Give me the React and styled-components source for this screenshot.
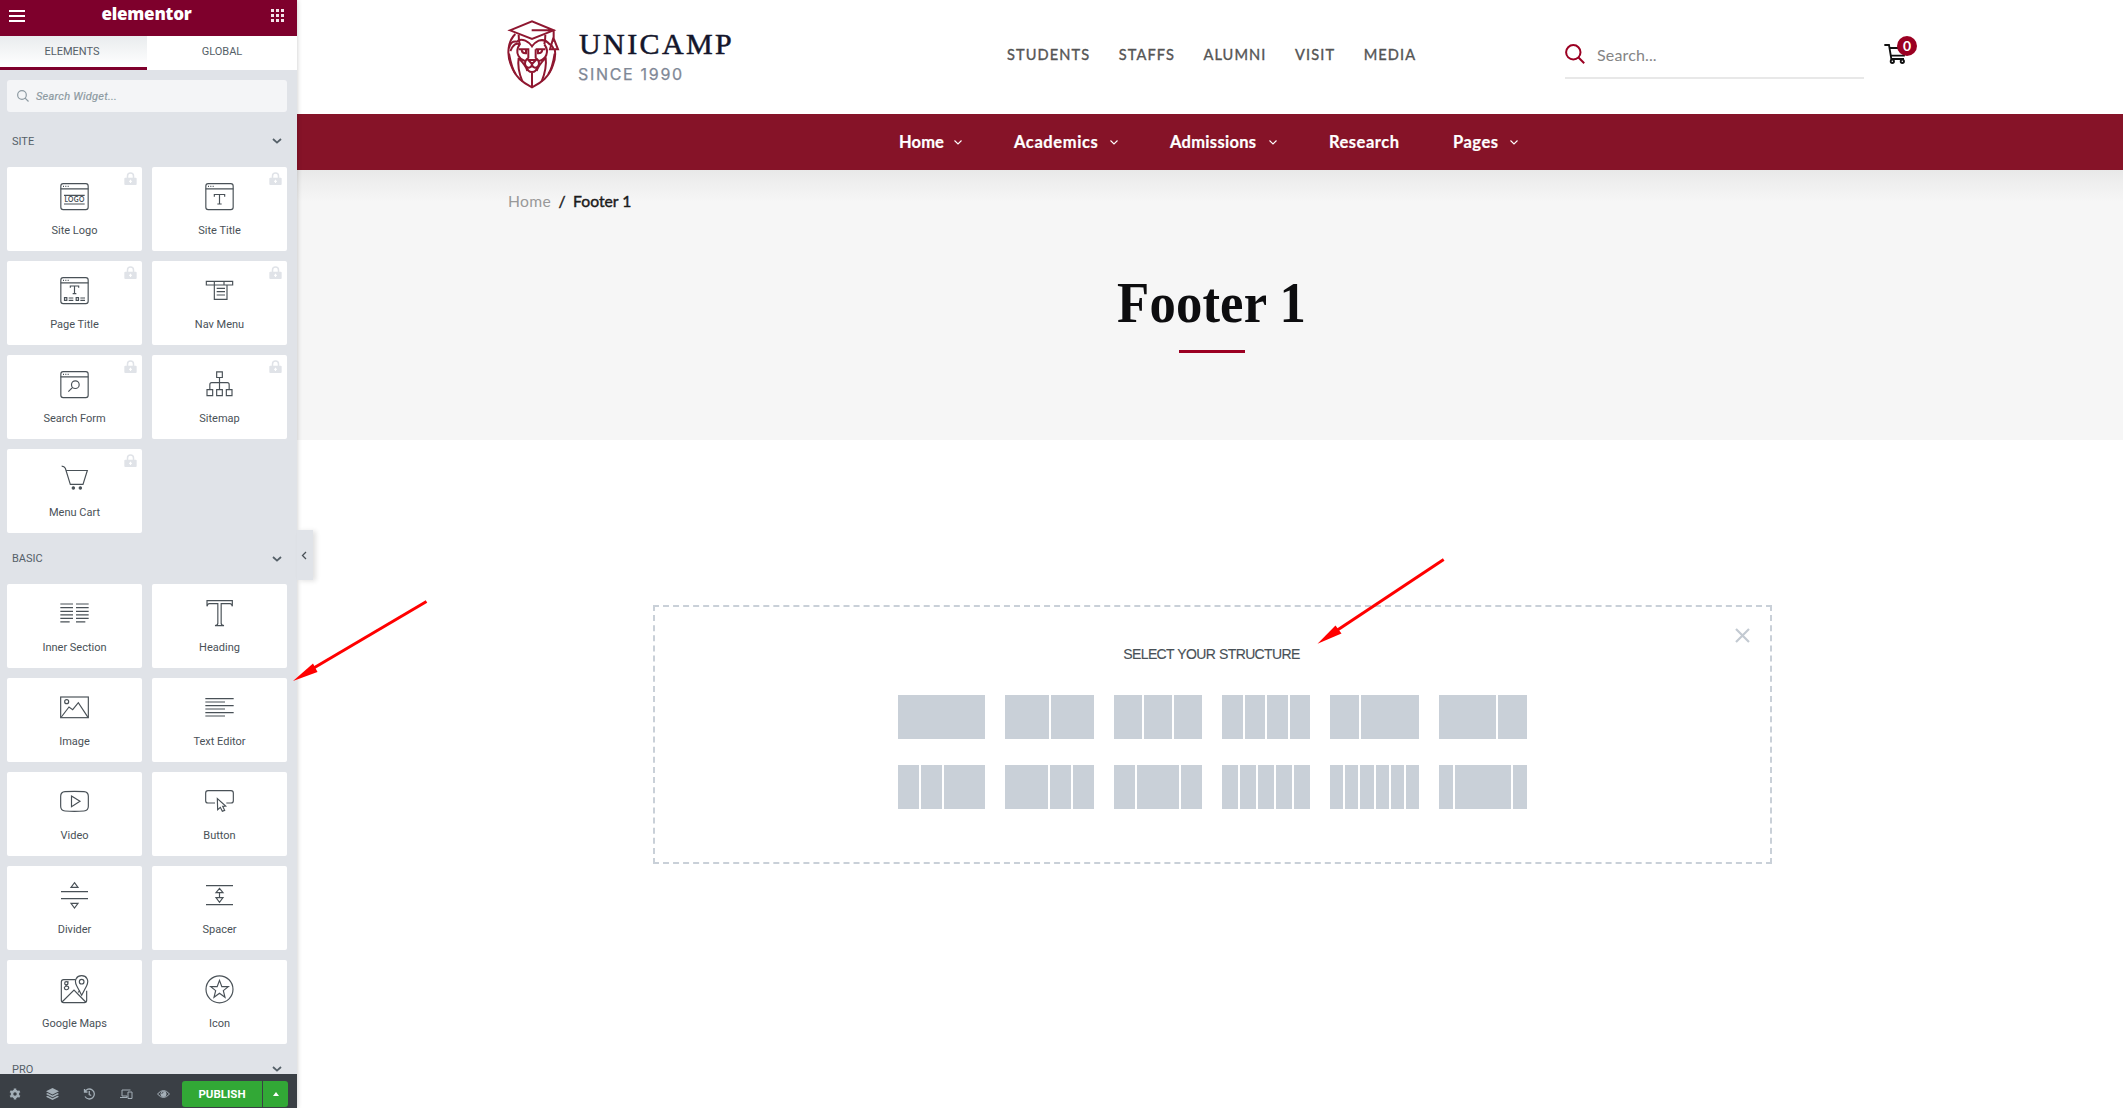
import React from "react";
import styled, { createGlobalStyle } from "styled-components";

const Global = createGlobalStyle`
  * { box-sizing: border-box; }
  html, body { margin: 0; padding: 0; background: #fff; overflow: hidden; }
`;

const Page = styled.div`
  position: relative;
  display: flex;
  width: 2123px;
  height: 1108px;
  overflow: hidden;
  font-family: Lato, "Liberation Sans", sans-serif;
`;

/* ---------- editor panel ---------- */
const Panel = styled.aside`
  position: relative;
  z-index: 2;
  display: flex;
  flex-direction: column;
  flex: none;
  width: 297px;
  height: 1108px;
  background: #e0e3e8;
  box-shadow: 0 0 5px rgba(0, 0, 0, 0.22);
  font-family: Roboto, "Liberation Sans", sans-serif;
`;
const PanelHeader = styled.header`
  display: flex;
  justify-content: space-between;
  flex: none;
  height: 36px;
  padding: 9px 13px 0 9px;
  background: #7e002c;
`;
const Burger = styled.div`
  display: flex;
  flex-direction: column;
  gap: 3px;
  padding-top: 1px;
  width: 16px;
  i { height: 2px; background: #fff; }
`;
const Brand = styled.div`
  margin: -8px 3px 0 0;
  font: 800 17px/26px "Open Sans", sans-serif;
  letter-spacing: -0.2px;
  color: #fff;
`;
const Dots = styled.div`
  display: grid;
  grid-template-columns: repeat(3, 3px);
  grid-auto-rows: 3px;
  gap: 2px;
  i { background: #f3e4e9; }
`;
const Tabs = styled.div`
  display: flex;
  flex: none;
  height: 34px;
`;
const Tab = styled.div`
  width: ${(p) => (p.$active ? 147 : 150)}px;
  padding-right: ${(p) => (p.$active ? 3 : 0)}px;
  text-align: center;
  font-size: 11px;
  line-height: 31px;
  color: #556068;
  background: ${(p) => (p.$active ? "linear-gradient(#e9ecee, #fff)" : "#fff")};
  border-bottom: 3px solid ${(p) => (p.$active ? "#7e002c" : "#fff")};
`;
const WidgetSearch = styled.div`
  display: flex;
  align-items: center;
  gap: 7px;
  flex: none;
  width: 280px;
  height: 32px;
  margin: 10px 0 0 7px;
  padding-left: 10px;
  border-radius: 3px;
  background: #f4f5f7;
  color: #8d9aa2;
  font-size: 11px;
  font-style: italic;
  letter-spacing: 0.25px;
  -webkit-text-stroke: 0.2px #8d9aa2;
`;
const Category = styled.div`
  display: flex;
  align-items: center;
  justify-content: space-between;
  flex: none;
  height: ${(p) => p.$h}px;
  padding: ${(p) => p.$pt || 0}px 15px 0 12px;
  font-size: 11px;
  color: #556068;
`;
const Grid = styled.div`
  display: grid;
  flex: none;
  grid-template-columns: 135px 135px;
  grid-auto-rows: 84px;
  gap: 10px;
  padding-left: 7px;
`;
const Card = styled.div`
  position: relative;
  display: flex;
  flex-direction: column;
  align-items: center;
  padding-top: 15px;
  border-radius: 2px;
  background: #fff;
  font-size: 11px;
  line-height: 14px;
  color: #495157;
  span { margin-top: 13px; }
`;
const LockBadge = styled.svg`
  position: absolute;
  right: 5px;
  top: 5px;
`;
const PanelFooter = styled.footer`
  display: flex;
  position: relative;
  flex: none;
  align-items: center;
  height: 34px;
  padding: 6px 9px 0 9px;
  background: #3a3f45;
`;
const Tools = styled.div`
  display: flex;
  justify-content: space-between;
  width: 161px;
`;
const Publish = styled.div`
  width: 80px;
  height: 26px;
  margin: 0 1px 0 12px;
  border-radius: 3px 0 0 3px;
  background: #32a836;
  color: #fff;
  font-size: 11.5px;
  font-weight: 700;
  line-height: 27px;
  text-align: center;
`;
const PublishMore = styled.div`
  display: flex;
  align-items: center;
  justify-content: center;
  width: 25px;
  height: 26px;
  border-radius: 0 3px 3px 0;
  background: #32a836;
`;
const Handle = styled.div`
  position: absolute;
  left: 297px;
  top: 530px;
  width: 15.5px;
  height: 50px;
  padding: 20px 0 0 4px;
  background: #e0e3e8;
  box-shadow: 3px 1px 5px rgba(0, 0, 0, 0.12);
  line-height: 0;
`;

/* ---------- site preview ---------- */
const Preview = styled.main`
  display: flex;
  flex-direction: column;
  flex: 1;
  min-width: 0;
`;
const SiteHeader = styled.header`
  display: flex;
  flex: none;
  height: 114px;
  padding-left: 210px;
  background: #fff;
`;
const Logo = styled.div`
  display: flex;
  width: 500px;
  padding-top: 20px;
`;
const LogoText = styled.div`
  margin-left: 18px;
`;
const LogoName = styled.div`
  margin: 7px 0 0 1px;
  font: 400 30px/34px "Liberation Serif", serif;
  letter-spacing: 2.4px;
  color: #14162b;
  -webkit-text-stroke: 0.5px #14162b;
  white-space: nowrap;
`;
const LogoSub = styled.div`
  margin-top: 3px;
  font: 400 16px/20px Inter, sans-serif;
  letter-spacing: 1.7px;
  color: #7f8896;
  -webkit-text-stroke: 0.25px #7f8896;
`;
const TopNav = styled.nav`
  display: flex;
  gap: 28.5px;
  width: 558px;
  font-size: 14.6px;
  line-height: 110px;
  letter-spacing: 1.1px;
  color: #555;
  -webkit-text-stroke: 0.35px #555;
`;
const SiteSearch = styled.div`
  display: flex;
  align-items: center;
  gap: 12px;
  width: 299px;
  height: 48px;
  margin-top: 31px;
  border-bottom: 2px solid #e8e8e8;
  color: #858585;
  font-size: 16px;
  letter-spacing: 0.15px;
`;
const Cart = styled.div`
  position: relative;
  margin: 43px 0 0 20px;
`;
const CartCount = styled.div`
  position: absolute;
  left: 13px;
  top: -7px;
  width: 20px;
  height: 20px;
  border-radius: 50%;
  background: #9b0022;
  color: #fff;
  font-size: 14px;
  font-weight: 700;
  line-height: 20px;
  text-align: center;
`;
const MainNav = styled.nav`
  display: flex;
  flex: none;
  height: 56px;
  padding-left: 602px;
  background: #861328;
  color: #fff;
  font-size: 16.5px;
  font-weight: 700;
  line-height: 56px;
  -webkit-text-stroke: 0.2px #fff;
`;
const NavItem = styled.div`
  display: flex;
  align-items: center;
  justify-content: space-between;
  width: ${(p) => p.$w}px;
  margin-right: 52px;
  letter-spacing: ${(p) => p.$ls}px;
  white-space: nowrap;
`;
const TitleArea = styled.section`
  display: flex;
  flex-direction: column;
  align-items: center;
  flex: none;
  height: 270px;
  padding-left: 4px;
  background: linear-gradient(#e8e8e8, #efefef 14px, #f6f6f6 32px, #f6f6f6);
`;
const Crumbs = styled.div`
  align-self: flex-start;
  display: flex;
  gap: 7.5px;
  padding: 20px 0 0 207px;
  font-size: 15.7px;
  line-height: 22px;
  color: #1c1c1c;
  -webkit-text-stroke: 0.45px #1c1c1c;
  span:first-child { color: #999; letter-spacing: 0.3px; -webkit-text-stroke: 0; }
`;
const Title = styled.h1`
  margin: 59px 0 0;
  font: 700 56px/64px "Liberation Serif", serif;
  letter-spacing: 0.2px;
  transform: scaleX(0.94);
  color: #0d0d0f;
`;
const TitleBar = styled.div`
  width: 66px;
  height: 3px;
  margin-top: 15px;
  background: #9b0022;
`;
const Structure = styled.section`
  position: relative;
  display: flex;
  flex-direction: column;
  align-items: center;
  width: 1119px;
  height: 259px;
  margin: 165px 0 0 356px;
  padding-top: 38px;
  border: 2px dashed #c9d0d8;
`;
const StructureTitle = styled.div`
  margin-right: 2px;
  font: 400 14px/18px "Liberation Sans", Arial, sans-serif;
  letter-spacing: -0.64px;
  word-spacing: 0.6px;
  color: #495157;
  -webkit-text-stroke: 0.15px #495157;
`;
const Presets = styled.div`
  display: grid;
  grid-template-columns: 87px 89px 88px 88px 89px 88px;
  gap: 26px 20px;
  margin-top: 32px;
`;
const Preset = styled.div`
  display: grid;
  grid-template-columns: ${(p) => p.$cols};
  gap: 2px;
  height: 44px;
  i { background: #c9d0d8; }
`;
const Close = styled.svg`
  position: absolute;
  right: 20.5px;
  top: 20.5px;
`;
const Annotation = styled.svg`
  position: absolute;
  z-index: 3;
  left: ${(p) => p.$x}px;
  top: ${(p) => p.$y}px;
`;

/* ---------- drawings ---------- */
const Frame = () => (
  <>
    <rect x="2.5" y="5" width="82" height="78" rx="7" />
    <path d="M2 20.500H85M9 13h3M16 13h3M23 13h3" />
  </>
);

const drawings = {
  logo: (
    <>
      <Frame />
      <path d="M12 40H74M12 66H74" />
      <text x="43.500" y="60" textAnchor="middle" fontFamily="Lato, sans-serif" fontWeight="700" fontSize="20" letterSpacing="1" stroke="none" fill="#495157">LOGO</text>
    </>
  ),
  title: (
    <>
      <Frame />
      <path d="M28 44V37.500H59V44M43.500 37.500V66M37 66H50" />
    </>
  ),
  pageTitle: (
    <>
      <Frame />
      <path d="M31 35V30H56V35M43.500 30V53M38 53H49M13.500 65h7v8h-7zM48.500 65h7v8h-7zM26 66H40M26 73H40M61 66H75M61 73H75" />
    </>
  ),
  nav: <path d="M4 16H83V27H66V70H28V27H4ZM28 27H66M28 16V27M57 16V27M35 37H60M35 47H60M35 57H60" />,
  search: (
    <>
      <Frame />
      <circle cx="46" cy="44" r="11.500" />
      <path d="M38 52L25 65" />
    </>
  ),
  sitemap: <path d="M35 5.500h17v17h-17zM6 59h17v18h-17zM35 59h17v18h-17zM64 59h17v18h-17zM43.500 22.500V59M14.500 59V44Q14.500 38 20 38H67Q72.500 38 72.500 44V59" />,
  cart: (
    <>
      <path d="M5 6.500Q13 6.500 16 13L31 61H69L82 19.500H18.500" />
      <circle cx="40" cy="72" r="3.500" fill="#495157" />
      <circle cx="61" cy="72" r="3.500" fill="#495157" />
    </>
  ),
  columns: <path d="M1 15H39M48 15H86M1 26H39M48 26H86M1 37H39M48 37H86M1 47.500H39M48 47.500H86M1 58H39M48 58H86M1 68.500H29M48 68.500H76" />,
  heading: <path d="M6 22V5H82V22Q80 14 75 14H48.500V73Q49 79 57 80H30Q38 79 38.500 73V14H13Q8 14 6 22Z" />,
  image: (
    <>
      <rect x="2" y="12" width="83" height="62" />
      <circle cx="20" cy="26" r="6" />
      <path d="M4 72L27 42L38 50L55 29L84 73" />
    </>
  ),
  text: <path d="M1 17H86M1 27H60M1 38H86M1 48H60M1 59H86M1 69H60" />,
  video: (
    <>
      <path d="M15 14Q43 12 72 14Q85 15 85 28V58Q85 71 72 72Q43 74 15 72Q2 71 2 58V28Q2 15 15 14Z" />
      <path d="M34.500 27L60 43L34.500 59Z" />
    </>
  ),
  button: (
    <>
      <path d="M30 48H9Q2 48 2 41V18Q2 11 9 11H78Q85 11 85 18V41Q85 48 78 48H64" />
      <path d="M37 35L38 68L46 61L52 73L59 70L53 58L62 57Z" />
    </>
  ),
  divider: <path d="M3 32H84M3 53H84M43.500 5L54 19H33ZM33 67H54L43.500 81Z" />,
  spacer: <path d="M3 14H84M3 71H84M43.500 22L54 35H33ZM33 50H54L43.500 64ZM43.500 35V50" />,
  maps: (
    <>
      <path d="M47 14H11Q4 14 4 21V76Q4 83 11 83H73Q80 83 80 76V47M6 81L42 45L77 81M54 52L60 47" />
      <path d="M65 61L50 32C41 16 50 2 65 2C80 2 88 16 80 32Z" />
      <circle cx="65" cy="20" r="7" />
      <circle cx="19" cy="25" r="5" />
      <path d="M25 19L23 22M24 27Q14 31 20 33Q27 34 26 40Q24 45 18 44Q13 43 13 38Q14 34 20 33" />
    </>
  ),
  star: (
    <>
      <circle cx="43.500" cy="43" r="40.500" />
      <path d="M43.500 16L50.500 35H70L55 47L60 67L43.500 55L27 67L32 47L17 35H36.500Z" />
    </>
  ),
};

const Glyph = ({ name }) => (
  <svg width="29" height="29" viewBox="0 0 87 87" fill="none" stroke="#495157" strokeWidth="3.5">
    {drawings[name]}
  </svg>
);

const Lock = () => (
  <LockBadge width="13" height="13" viewBox="0 0 39 39">
    <path d="M10.500 20V12a9 9 0 0 1 18 0V20" fill="none" stroke="#e0e3e8" strokeWidth="4.500" />
    <rect x="1" y="17" width="37" height="22" rx="3" fill="#e0e3e8" />
    <path d="M19.500 23V33M15.500 28h8" stroke="#fff" strokeWidth="3.500" />
  </LockBadge>
);

const Chevron = () => (
  <svg width="10" height="6" viewBox="0 0 10 6">
    <path d="M1 1L5 4.600L9 1" fill="none" stroke="#556068" strokeWidth="1.800" />
  </svg>
);

const SmallChevron = () => (
  <svg width="8" height="5" viewBox="0 0 8 5">
    <path d="M0.500 0.500L4 4L7.500 0.500" fill="none" stroke="#fff" strokeWidth="1.100" />
  </svg>
);

const Lion = () => (
  <svg width="53" height="71" viewBox="22 19 159 213" fill="none" stroke="#8f1730" strokeWidth="6">
    <path d="M31 50L97 23L162 50L97 76ZM96 50H162V84M161 72L151 107H175L162 74" />
    <path d="M47 61C25 82 20 122 34 154C46 190 70 207 97 221C124 207 149 190 160 154C166 138 168 120 165 106" />
    <path d="M57 63Q57 78 60 92M137 63Q137 78 134 92" />
    <path d="M28 104Q32 80 52 84Q60 74 77 81Q90 87 97 98Q104 87 117 81Q136 75 149 91Q158 94 162 108" />
    <path d="M32 112Q44 84 60 92Q48 110 56 126Q62 138 76 142M134 92Q146 108 140 124Q134 138 118 142" />
    <path d="M57 107H86V132Q76 140 76 149Q77 162 88 162Q97 161 97 149M108 107V132Q118 140 118 149Q117 162 106 162Q97 161 97 149M108 107H137" />
    <path d="M86 139H109L97 151ZM66 108Q67 120 79 119V108M128 108Q127 120 115 119V108" />
    <path d="M81 160Q84 175 97 175Q110 175 113 160M97 174V219" />
    <path d="M28 120Q36 164 48 181M57 133Q52 164 68 203M58 134Q80 158 83 172M165 120Q158 164 146 181M138 131Q142 164 126 203M136 134Q116 156 111 172" />
  </svg>
);

const CartIcon = () => (
  <svg width="22" height="22" viewBox="0 0 66 66" fill="none" stroke="#111" strokeWidth="5.500">
    <path d="M1 6H15L22 48H60M17 15H62L60 38H21" />
    <circle cx="25" cy="55" r="5" />
    <circle cx="55" cy="55" r="5" />
  </svg>
);

const SearchIcon = ({ size, color, weight }) => (
  <svg width={size} height={size} viewBox="0 0 20 20" fill="none" stroke={color} strokeWidth={weight}>
    <circle cx="8.300" cy="8.300" r="7.200" />
    <path d="M13.500 13.500L19.200 19.200" />
  </svg>
);

const ToolIcons = () => (
  <Tools>
    <svg width="12" height="12" viewBox="0 0 24 24" fill="none">
      <circle cx="12" cy="12" r="6" stroke="#a4afb7" strokeWidth="5" />
      <path d="M12 1V6M12 18V23M2.500 6.500L7 9M17 15L21.500 17.500M2.500 17.500L7 15M17 9L21.500 6.500" stroke="#a4afb7" strokeWidth="5" />
    </svg>
    <svg width="13" height="12" viewBox="0 0 26 24" fill="#a4afb7">
      <path d="M13 0L26 6.500L13 13L0 6.500ZM3 10L13 15L23 10L26 12L13 18.500L0 12ZM3 15.500L13 20.500L23 15.500L26 17.500L13 24L0 17.500Z" />
    </svg>
    <svg width="12" height="12" viewBox="0 0 24 24" fill="none" stroke="#a4afb7" strokeWidth="2.600">
      <path d="M3 2V8H9M3.500 8A10 10 0 1 1 4 17M12.500 6V13L16.500 15" />
    </svg>
    <svg width="13" height="12" viewBox="0 0 26 24" fill="none" stroke="#a4afb7" strokeWidth="2">
      <path d="M4 16V4H21M0 19H14V16H4M16 8H24V21H16Z" />
    </svg>
    <svg width="13" height="12" viewBox="0 0 26 24">
      <path d="M1 12Q13 -2 25 12Q13 26 1 12Z" fill="none" stroke="#a4afb7" strokeWidth="2" />
      <circle cx="13" cy="12" r="6" fill="#a4afb7" />
      <path d="M9.500 12a3.500 3.500 0 0 1 3.500-3.500" fill="none" stroke="#3a3f45" strokeWidth="1.500" />
    </svg>
  </Tools>
);

/* ---------- data ---------- */
const siteWidgets = [
  ["logo", "Site Logo"],
  ["title", "Site Title"],
  ["pageTitle", "Page Title"],
  ["nav", "Nav Menu"],
  ["search", "Search Form"],
  ["sitemap", "Sitemap"],
  ["cart", "Menu Cart"],
];
const basicWidgets = [
  ["columns", "Inner Section"],
  ["heading", "Heading"],
  ["image", "Image"],
  ["text", "Text Editor"],
  ["video", "Video"],
  ["button", "Button"],
  ["divider", "Divider"],
  ["spacer", "Spacer"],
  ["maps", "Google Maps"],
  ["star", "Icon"],
];
const navItems = [
  { label: "Home", w: 63, ls: 0.1, menu: true },
  { label: "Academics", w: 104, ls: 0.6, menu: true },
  { label: "Admissions", w: 107, ls: 0.3, menu: true },
  { label: "Research", w: 72, ls: 0.5 },
  { label: "Pages", w: 65, ls: 0.5, menu: true },
];
const presets = [
  [1],
  [1, 1],
  [1, 1, 1],
  [1, 1, 1, 1],
  [1, 2],
  [2, 1],
  [1, 1, 2],
  [2, 1, 1],
  [1, 2, 1],
  [1, 1, 1, 1, 1],
  [1, 1, 1, 1, 1, 1],
  [1, 4, 1],
];

const WidgetGrid = ({ items, locked }) => (
  <Grid>
    {items.map(([icon, label]) => (
      <Card key={label}>
        <Glyph name={icon} />
        <span>{label}</span>
        {locked && <Lock />}
      </Card>
    ))}
  </Grid>
);

export default function App() {
  return (
    <Page>
      <Global />
      <Panel>
        <PanelHeader>
          <Burger><i /><i /><i /></Burger>
          <Brand>elementor</Brand>
          <Dots>{Array.from({ length: 9 }, (_, i) => <i key={i} />)}</Dots>
        </PanelHeader>
        <Tabs>
          <Tab $active>ELEMENTS</Tab>
          <Tab>GLOBAL</Tab>
        </Tabs>
        <WidgetSearch>
          <SearchIcon size={12} color="#8d9aa2" weight={2} />
          Search Widget...
        </WidgetSearch>
        <Category $h={55} $pt={3}>SITE<Chevron /></Category>
        <WidgetGrid items={siteWidgets} locked />
        <Category $h={51}>BASIC<Chevron /></Category>
        <WidgetGrid items={basicWidgets} />
        <Category $h={30} $pt={20}>PRO<Chevron /></Category>
        <PanelFooter>
          <ToolIcons />
          <Publish>PUBLISH</Publish>
          <PublishMore>
            <svg width="6" height="4" viewBox="0 0 6 4"><path d="M0 4L3 0L6 4Z" fill="#fff" /></svg>
          </PublishMore>
        </PanelFooter>
        <Handle>
          <svg width="6" height="10" viewBox="0 0 6 10">
            <path d="M5 2L1.500 5.500L5 9" fill="none" stroke="#495157" strokeWidth="1.300" />
          </svg>
        </Handle>
      </Panel>

      <Preview>
        <SiteHeader>
          <Logo>
            <Lion />
            <LogoText>
              <LogoName>UNICAMP</LogoName>
              <LogoSub>SINCE 1990</LogoSub>
            </LogoText>
          </Logo>
          <TopNav>
            {["STUDENTS", "STAFFS", "ALUMNI", "VISIT", "MEDIA"].map((t) => <span key={t}>{t}</span>)}
          </TopNav>
          <SiteSearch>
            <SearchIcon size={20} color="#9b0022" weight={2} />
            Search...
          </SiteSearch>
          <Cart>
            <CartIcon />
            <CartCount>0</CartCount>
          </Cart>
        </SiteHeader>
        <MainNav>
          {navItems.map((n) => (
            <NavItem key={n.label} $w={n.w} $ls={n.ls}>
              {n.label}
              {n.menu && <SmallChevron />}
            </NavItem>
          ))}
        </MainNav>
        <TitleArea>
          <Crumbs><span>Home</span><span>/</span><span>Footer 1</span></Crumbs>
          <Title>Footer 1</Title>
          <TitleBar />
        </TitleArea>
        <Structure>
          <StructureTitle>SELECT YOUR STRUCTURE</StructureTitle>
          <Presets>
            {presets.map((cols, i) => (
              <Preset key={i} $cols={cols.map((c) => `${c}fr`).join(" ")}>
                {cols.map((_, j) => <i key={j} />)}
              </Preset>
            ))}
          </Presets>
          <Close width="15" height="15" viewBox="0 0 15 15">
            <path d="M1 1L14 14M14 1L1 14" stroke="#c3cad2" strokeWidth="2.200" />
          </Close>
        </Structure>
      </Preview>

      <Annotation $x={290} $y={598} width="140" height="86" viewBox="290 598 140 86">
        <path d="M426.500 601.500L312 669" stroke="#f00" strokeWidth="3" />
        <path d="M293 681L313 663.500L317.500 672Z" fill="#f00" />
      </Annotation>
      <Annotation $x={1314} $y={556} width="134" height="90" viewBox="1314 556 134 90">
        <path d="M1443.700 559.500L1336 631" stroke="#f00" strokeWidth="3" />
        <path d="M1317.500 643.700L1335.500 625.500L1341.500 633.500Z" fill="#f00" />
      </Annotation>
    </Page>
  );
}
